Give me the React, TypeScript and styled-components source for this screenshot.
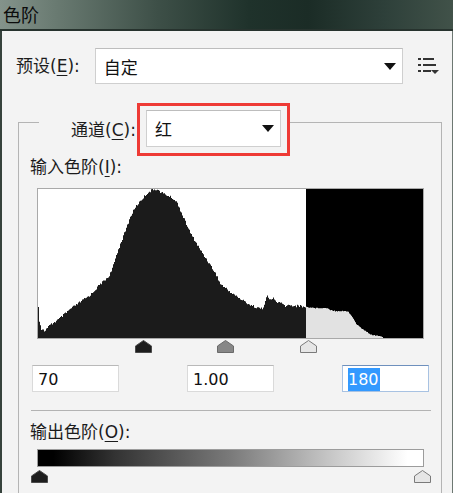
import React from 'react';
import styled, { createGlobalStyle } from 'styled-components';

// histogram outline, in page pixels (x, y); inner plot starts at 38,190
const dark: [number, number][] = [
  [38, 308], [39, 322], [41, 330], [44, 332], [50, 326], [60, 319], [70, 310],
  [80, 303], [90, 296], [100, 285], [108, 278], [112, 270], [116, 256], [120, 245],
  [125, 232], [130, 218], [135, 208], [140, 202], [147, 194], [152, 191], [156, 190],
  [160, 193], [166, 196], [172, 199], [177, 204], [182, 216], [190, 234], [200, 251],
  [210, 266], [216, 276], [220, 285], [230, 293], [240, 300], [250, 306], [258, 309],
  [262, 310], [265, 302], [267, 297], [269, 300], [271, 301], [273, 299], [276, 303],
  [280, 304], [285, 307], [290, 306], [295, 307], [300, 307], [305, 308],
];

const clipped: [number, number][] = [
  [306, 308], [315, 309], [320, 309], [327, 309], [330, 311], [335, 312], [345, 312],
  [348, 313], [352, 318], [356, 325], [362, 330], [368, 334], [372, 336], [380, 337],
  [382, 339],
];

const OX = 38;
const OY = 190;
const W = 385;
const H = 149;

const interp = (pts: [number, number][], x: number) => {
  for (let i = 1; i < pts.length; i++) {
    const [x0, y0] = pts[i - 1];
    const [x1, y1] = pts[i];
    if (x <= x1) {
      const t = x1 === x0 ? 0 : (x - x0) / (x1 - x0);
      return y0 + (y1 - y0) * t;
    }
  }
  return pts[pts.length - 1][1];
};

const noise = (n: number) => {
  const v = Math.sin(n * 12.9898) * 43758.5453;
  return v - Math.floor(v);
};

const stepped = (pts: [number, number][], from: number, to: number, amp: number) => {
  let d = `M${from - OX} ${H}`;
  for (let x = from; x < to; x++) {
    let y = interp(pts, x) + (noise(x) - 0.5) * amp;
    y = Math.min(y, OY + H - 1);
    d += ` L${x - OX} ${(y - OY).toFixed(1)} L${x + 1 - OX} ${(y - OY).toFixed(1)}`;
  }
  return d + ` L${to - OX} ${H} Z`;
};

const GlobalStyle = createGlobalStyle`
  html, body {
    margin: 0;
    padding: 0;
    background: #f3f3f3;
  }
  body {
    font-family: "DejaVu Sans", "Noto Sans CJK SC", sans-serif;
    color: #1a1a1a;
  }
`;

const Window = styled.div`
  width: 453px;
  height: 493px;
  overflow: hidden;
  display: flex;
  flex-direction: column;
`;

const TitleBar = styled.div`
  height: 31px;
  flex-shrink: 0;
  padding: 3px 0 0 3px;
  box-sizing: border-box;
  background: linear-gradient(90deg, #84938b 0%, #6a7b72 12%, #3d4f47 35%, #1f322b 55%, #1b2c26 68%, #2e403a 85%, #415249 100%);
  border-bottom: 2px solid #27332e;
  font-family: "Noto Sans CJK SC", sans-serif;
  font-size: 18px;
  line-height: 22px;
  color: #0c0c0c;
`;

const Body = styled.div`
  flex: 1;
  background: #f3f3f3;
  border-left: 2px solid #36423c;
  border-right: 1px solid #6d7872;
  padding-top: 17px;
`;

const Row = styled.div`
  display: flex;
  align-items: center;
  padding-left: 14px;
`;

const Label = styled.span`
  font-size: 17px;
  line-height: 22px;
  color: #1c1c1c;
  white-space: nowrap;
  u {
    text-decoration-thickness: 1px;
    text-underline-offset: 3px;
  }
`;

const SelectBox = styled.div<{ $w: number; $h: number }>`
  width: ${(p) => p.$w}px;
  height: ${(p) => p.$h}px;
  box-sizing: border-box;
  display: flex;
  align-items: center;
  justify-content: space-between;
  padding: 0 6px 0 8px;
  background: #fff;
  border: 1px solid #cfcfcf;
  border-top-color: #bdbdbd;
  font-family: "Noto Sans CJK SC", sans-serif;
  font-size: 17px;
  color: #111;
`;

const PresetSelect = styled(SelectBox)`
  margin-left: 15px;
`;

const Arrow = () => (
  <svg width="12" height="7" viewBox="0 0 12 7">
    <polygon points="0,0 12,0 6,7" fill="#111" />
  </svg>
);

const MenuButton = styled.div`
  margin-left: 15px;
  display: flex;
  align-items: center;
`;

const MenuIcon = () => (
  <svg width="22" height="18" viewBox="0 0 22 18">
    <rect x="0" y="1" width="3" height="2" fill="#333" />
    <rect x="5" y="1" width="11" height="2" fill="#333" />
    <rect x="0" y="7" width="3" height="2" fill="#333" />
    <rect x="5" y="7" width="13" height="2" fill="#333" />
    <rect x="0" y="13" width="3" height="2" fill="#333" />
    <rect x="5" y="13" width="8" height="2" fill="#333" />
    <polygon points="13,13 21,13 17,17" fill="#333" />
  </svg>
);

const Group = styled.div`
  margin: 19px 0 0 16px;
  width: 424px;
`;

const GroupHead = styled.div`
  display: flex;
  align-items: flex-start;
`;

const HeadLine = styled.div<{ $side: 'left' | 'right' }>`
  align-self: stretch;
  margin-top: 19px;
  border-top: 1px solid #b4b4b4;
  ${(p) => (p.$side === 'left'
    ? 'width: 20px; border-left: 1px solid #b4b4b4;'
    : 'flex: 1; border-right: 1px solid #b4b4b4;')}
`;

const Legend = styled.div`
  display: flex;
  align-items: center;
  padding-left: 32px;
`;

const Highlight = styled.div`
  margin-left: 1px;
  border: 3px solid #ee3a35;
  padding: 4px 6px 6px 6px;
`;

const GroupBody = styled.div`
  border: 1px solid #b4b4b4;
  border-top: none;
  padding: 0 11px 30px 11px;
  display: flex;
  flex-direction: column;
`;

const Plot = styled.div`
  margin: 10px 0 0 7px;
  width: 387px;
  height: 151px;
  box-sizing: border-box;
  border: 1px solid #a9a9a9;
  background: #fff;
  svg {
    display: block;
  }
`;

const Track = styled.div<{ $top: number }>`
  position: relative;
  margin-left: 7px;
  width: 387px;
  height: 15px;
  svg {
    position: absolute;
    top: ${(p) => p.$top}px;
  }
`;

const thumbColors: Record<string, [string, string]> = {
  black: ['#1d1d1d', '#4a4a4a'],
  gray: ['#878787', '#6a6a6a'],
  white: ['#e6e6e6', '#7a7a7a'],
};

const Thumb = ({ tone, center }: { tone: 'black' | 'gray' | 'white'; center: number }) => {
  const [fill, stroke] = thumbColors[tone];
  return (
    <svg width="17" height="13" viewBox="0 0 17 13" style={{ left: center - 8.5 }}>
      <polygon points="8.5,0.5 16.5,6 16.5,12.5 0.5,12.5 0.5,6" fill={fill} stroke={stroke} />
    </svg>
  );
};

const Fields = styled.div`
  margin: 11px 0 0 2px;
  width: 397px;
  display: flex;
  justify-content: space-between;
`;

const Field = styled.div<{ $focused?: boolean }>`
  width: 87px;
  height: 27px;
  box-sizing: border-box;
  padding-left: 5px;
  background: #fff;
  border: 1px solid ${(p) => (p.$focused ? '#a8c2e2' : '#dadada')};
  border-top-color: ${(p) => (p.$focused ? '#6e90bd' : '#b9b9b9')};
  font-size: 16px;
  line-height: 27px;
  color: #111;
`;

const Selected = styled.span`
  background: #3399ff;
  color: #fff;
  padding: 2px 1px 2px 0;
`;

const Divider = styled.div`
  margin: 18px 0 0 1px;
  width: 400px;
  height: 1px;
  background: #b3b3b3;
`;

const OutputLabel = styled(Label)`
  margin-top: 10px;
  display: block;
`;

const FirstLabel = styled(Label)`
  display: block;
`;

const Ramp = styled.div`
  margin: 6px 0 0 7px;
  width: 387px;
  height: 18px;
  box-sizing: border-box;
  border: 1px solid #9c9c9c;
  background: linear-gradient(90deg, #000 4%, #333 20%, #7a7a7a 50%, #c4c4c4 75%, #fff 96%);
`;

// level -> x inside the 387px plot box
const levelX = (v: number) => 1 + (v * W) / 256;

export default function App() {
  const darkPath = stepped(dark, 38, 306, 2.6);
  const clipPath = stepped(clipped, 306, 383, 0.8);

  return (
    <Window>
      <GlobalStyle />
      <TitleBar>色阶</TitleBar>
      <Body>
        <Row>
          <Label>预设(<u>E</u>):</Label>
          <PresetSelect $w={308} $h={36}>
            <span>自定</span>
            <Arrow />
          </PresetSelect>
          <MenuButton>
            <MenuIcon />
          </MenuButton>
        </Row>

        <Group>
          <GroupHead>
            <HeadLine $side="left" />
            <Legend>
              <Label>通道(<u>C</u>):</Label>
              <Highlight>
                <SelectBox $w={135} $h={37}>
                  <span>红</span>
                  <Arrow />
                </SelectBox>
              </Highlight>
            </Legend>
            <HeadLine $side="right" />
          </GroupHead>

          <GroupBody>
            <FirstLabel>输入色阶(<u>I</u>):</FirstLabel>
            <Plot>
              <svg width={W} height={H} viewBox={`0 0 ${W} ${H}`}>
                <path d={darkPath} fill="#1b1b1b" />
                <rect x={306 - OX} y="0" width={W - (306 - OX)} height={H} fill="#000" />
                <path d={clipPath} fill="#e2e2e2" />
              </svg>
            </Plot>
            <Track $top={1}>
              <Thumb tone="black" center={levelX(70)} />
              <Thumb tone="gray" center={levelX(125)} />
              <Thumb tone="white" center={levelX(180)} />
            </Track>
            <Fields>
              <Field>70</Field>
              <Field>1.00</Field>
              <Field $focused>
                <Selected>180</Selected>
              </Field>
            </Fields>
            <Divider />
            <OutputLabel>输出色阶(<u>O</u>):</OutputLabel>
            <Ramp />
            <Track $top={3}>
              <Thumb tone="black" center={2} />
              <Thumb tone="white" center={385} />
            </Track>
          </GroupBody>
        </Group>
      </Body>
    </Window>
  );
}
